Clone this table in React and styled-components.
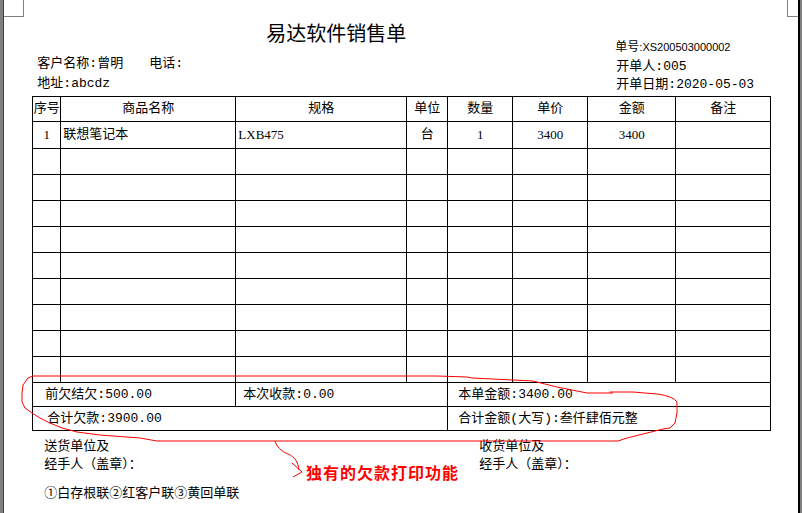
import React from 'react';
import styled, { createGlobalStyle } from 'styled-components';

const GlobalStyle = createGlobalStyle`
  html, body {
    margin: 0;
    padding: 0;
    background: #ffffff;
  }
  body {
    font-family: "Liberation Mono", "Noto Sans CJK SC", monospace;
    color: #000;
  }
`;

const Frame = styled.div`
  position: relative;
  display: flex;
  width: 802px;
  height: 513px;
  overflow: hidden;
`;

const LeftEdge = styled.div`
  width: 4px;
  background: #808080;
  border-right: 1px solid #404040;
`;

const RightEdge = styled.div`
  width: 2px;
  background: #808080;
  border-left: 2px solid #000;
`;

const Paper = styled.div`
  position: relative;
  flex: 1;
  background: #fff;
  padding: 0 27px 0 28px;
  font-size: 13px;

  &::before,
  &::after {
    content: '';
    position: absolute;
    top: 0;
    height: 16px;
    border-bottom: 1px solid #808080;
  }
  &::before {
    left: 0;
    width: 19px;
    border-right: 1px solid #808080;
  }
  &::after {
    right: 0;
    width: 10px;
    border-left: 1px solid #808080;
  }
`;

const Header = styled.div`
  display: flex;
  height: 94px;
`;

const HeaderMain = styled.div`
  flex: 1;
  padding-left: 5px;
`;

const Title = styled.div`
  padding: 21px 0 0 229px;
  font-family: "Noto Sans CJK SC", sans-serif;
  font-size: 20px;
  line-height: 24px;
  margin-bottom: 9px;
`;

const InfoRow = styled.div`
  display: flex;
  line-height: 20px;
  white-space: nowrap;
`;

const Field = styled.span`
  width: ${p => p.$width || 'auto'};
`;

const HeaderSide = styled.div`
  width: 155px;
  padding-top: 38px;
`;

const SideLine = styled.div`
  line-height: 18.5px;
  white-space: nowrap;
  margin-left: ${p => p.$shift || 0}px;
  font-size: ${p => p.$size || 13}px;
`;

const Code = styled.span`
  font-family: "Liberation Sans", sans-serif;
  font-size: 11px;
`;

const Sheet = styled.table`
  width: 738px;
  margin-top: 2px;
  border-collapse: collapse;
  table-layout: fixed;
  border: 1px solid #000;
`;

const Row = styled.tr`
  height: ${p => p.$h}px;
`;

const HeadCell = styled.th`
  border: 1px solid #000;
  font-weight: normal;
  text-align: center;
  padding: 0;
  line-height: 16px;
  white-space: nowrap;
`;

const Cell = styled.td`
  border: 1px solid #000;
  padding: 0 0 0 ${p => (p.$left ? 2 : 0)}px;
  text-align: ${p => (p.$left ? 'left' : 'center')};
  line-height: 16px;
  white-space: nowrap;
  font-family: ${p => (p.$serif ? '"Liberation Serif", "Noto Sans CJK SC", serif' : 'inherit')};
`;

const SumCell = styled.td`
  border: 1px solid #000;
  padding: 0 0 0 ${p => p.$indent}px;
  line-height: 16px;
  white-space: nowrap;
`;

const Footer = styled.div`
  display: grid;
  grid-template-columns: 447px auto;
  margin-top: 7px;
  line-height: 18px;
`;

const Signer = styled.div`
  padding-left: ${p => p.$indent}px;
`;

const Note = styled.div`
  margin-top: 11px;
  padding-left: 12px;
  line-height: 18px;
`;

const Annotation = styled.svg`
  position: absolute;
  left: 0;
  top: 0;
  pointer-events: none;
`;

const Callout = styled.div`
  position: absolute;
  left: 306px;
  top: 462px;
  color: #f00;
  font-family: "Noto Sans CJK SC", sans-serif;
  font-weight: 700;
  font-size: 16px;
  line-height: 20px;
  letter-spacing: 1px;
`;

const columns = [28, 175, 171, 41, 65, 75, 88, 95];
const heads = ['序号', '商品名称', '规格', '单位', '数量', '单价', '金额', '备注'];

const items = [
  { no: '1', name: '联想笔记本', spec: 'LXB475', unit: '台', qty: '1', price: '3400', amount: '3400', memo: '' },
  ...Array.from({ length: 9 }, () => null),
];

export default function App() {
  return (
    <>
      <GlobalStyle />
      <Frame>
        <LeftEdge />
        <Paper>
          <Header>
            <HeaderMain>
              <Title>易达软件销售单</Title>
              <InfoRow>
                <Field $width="112px">客户名称:曾明</Field>
                <Field>电话:</Field>
              </InfoRow>
              <InfoRow>地址:abcdz</InfoRow>
            </HeaderMain>
            <HeaderSide>
              <SideLine $shift={-1} $size={12}>单号<Code>:XS200503000002</Code></SideLine>
              <SideLine>开单人:005</SideLine>
              <SideLine>开单日期:2020-05-03</SideLine>
            </HeaderSide>
          </Header>

          <Sheet>
            <colgroup>
              {columns.map((w, i) => <col key={i} style={{ width: w }} />)}
            </colgroup>
            <thead>
              <Row $h={25}>
                {heads.map(h => <HeadCell key={h}>{h}</HeadCell>)}
              </Row>
            </thead>
            <tbody>
              {items.map((it, i) => (
                <Row key={i} $h={i === 0 ? 27 : 26}>
                  <Cell $serif>{it?.no}</Cell>
                  <Cell $left>{it?.name}</Cell>
                  <Cell $left $serif>{it?.spec}</Cell>
                  <Cell>{it?.unit}</Cell>
                  <Cell $serif>{it?.qty}</Cell>
                  <Cell $serif>{it?.price}</Cell>
                  <Cell $serif>{it?.amount}</Cell>
                  <Cell>{it?.memo}</Cell>
                </Row>
              ))}
              <Row $h={24}>
                <SumCell colSpan={2} $indent={12}>前欠结欠:500.00</SumCell>
                <SumCell colSpan={2} $indent={7}>本次收款:0.00</SumCell>
                <SumCell colSpan={4} $indent={10}>本单金额:3400.00</SumCell>
              </Row>
              <Row $h={24}>
                <SumCell colSpan={4} $indent={14}>合计欠款:3900.00</SumCell>
                <SumCell colSpan={4} $indent={10}>合计金额(大写):叁仟肆佰元整</SumCell>
              </Row>
            </tbody>
          </Sheet>

          <Footer>
            <Signer $indent={12}>
              <div>送货单位及</div>
              <div>经手人（盖章）：</div>
            </Signer>
            <Signer $indent={0}>
              <div>收货单位及</div>
              <div>经手人（盖章）：</div>
            </Signer>
          </Footer>
          <Note>①白存根联②红客户联③黄回单联</Note>
        </Paper>
        <RightEdge />

        <Annotation width="802" height="513" viewBox="0 0 802 513">
          <g fill="none" stroke="#f00" strokeWidth="1">
            <path d="M33,376 L437,376 L467,377 L472,378 L533,381 L557,387 L587,393 L613,393" />
            <path d="M610,392 L633,392 L657,394 Q673,396 677,402 L677,413 L675,423 L670,428 L663,429 L647,433 L627,438 L618,441 L157,441 L140,438 L100,435 L77,432 L62,428 L50,423 L40,418 L32,413 L25,408 L22,402 L22,393 L23,385 L28,378 L33,376" />
            <path d="M275,441 C277,447 281,451 288,454 C295,457 298,462 299,470" />
            <path d="M292,463 L302,472 L293,477" />
          </g>
        </Annotation>
        <Callout>独有的欠款打印功能</Callout>
      </Frame>
    </>
  );
}
